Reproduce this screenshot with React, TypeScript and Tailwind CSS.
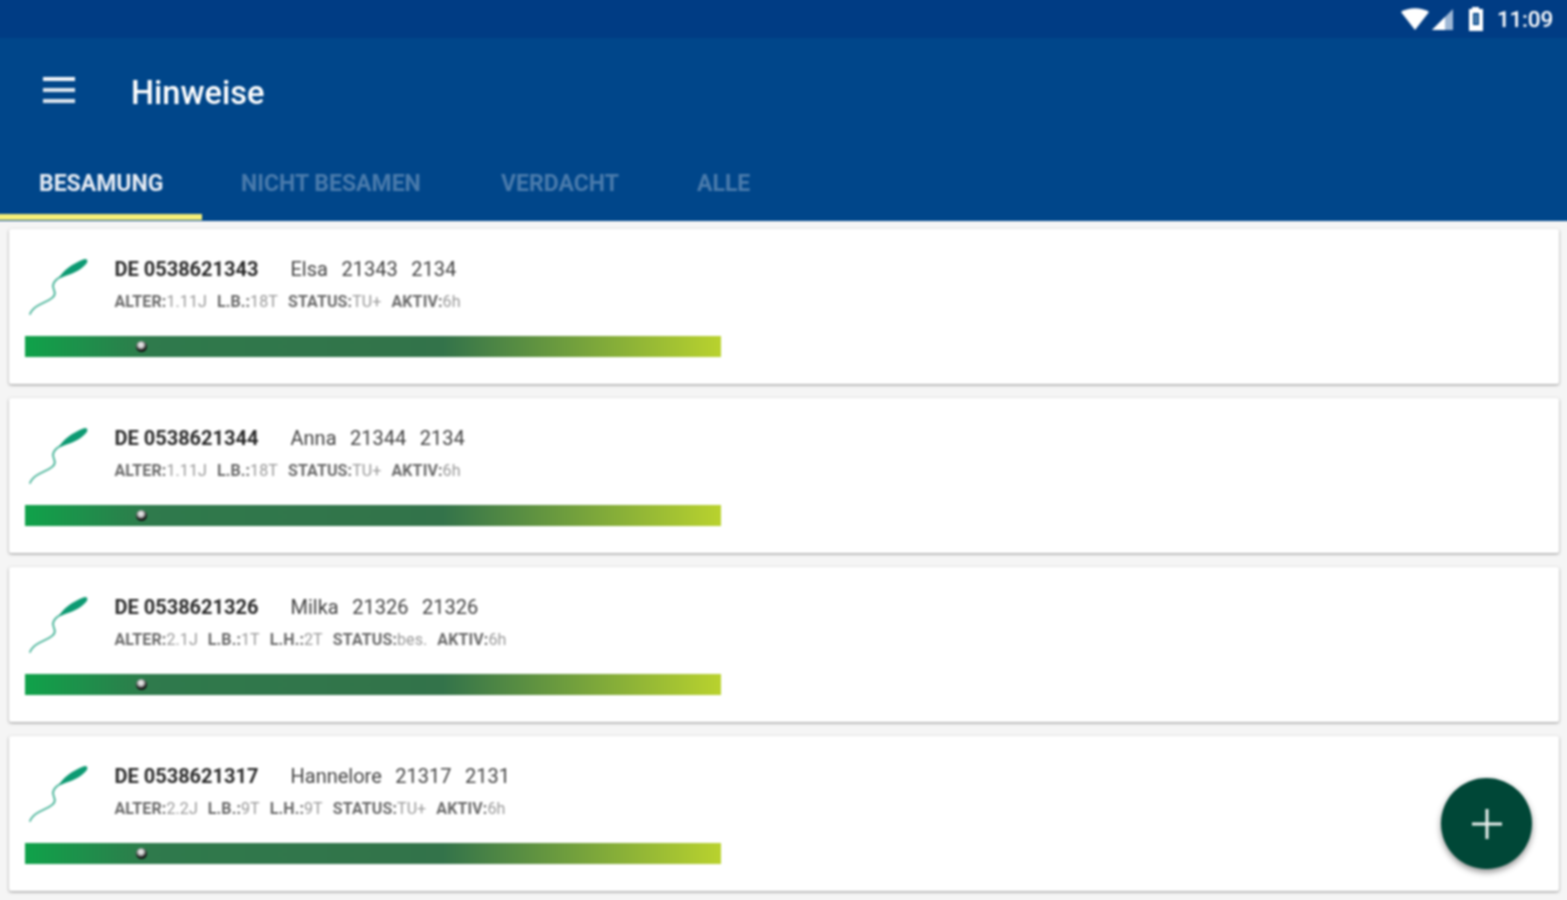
import React from "react";

const cows = [
  { id: "DE 0538621343", name: "Elsa  21343  2134", meta: [["ALTER:", "1.11J"], ["L.B.:", "18T"], ["STATUS:", "TU+"], ["AKTIV:", "6h"]] },
  { id: "DE 0538621344", name: "Anna  21344  2134", meta: [["ALTER:", "1.11J"], ["L.B.:", "18T"], ["STATUS:", "TU+"], ["AKTIV:", "6h"]] },
  { id: "DE 0538621326", name: "Milka  21326  21326", meta: [["ALTER:", "2.1J"], ["L.B.:", "1T"], ["L.H.:", "2T"], ["STATUS:", "bes."], ["AKTIV:", "6h"]] },
  { id: "DE 0538621317", name: "Hannelore  21317  2131", meta: [["ALTER:", "2.2J"], ["L.B.:", "9T"], ["L.H.:", "9T"], ["STATUS:", "TU+"], ["AKTIV:", "6h"]] },
];

function Sperm() {
  return (
    <svg width="64" height="60" viewBox="0 0 64 60" className="shrink-0">
      <path d="M5 57 C7 52 10 50 14 48 C18 46 20 45 24 43 C30 40 31 37 29 33 C27 29 28 26 31 23 C33 21 35 20 37 19" fill="none" stroke="#45b397" strokeWidth="1.8" strokeLinecap="round" />
      <path d="M34 21 C36 17 39 14 43 11 C48 7 56 3 60 2 C63 2 63 5 61 7 C57 12 49 16 43 18 C39 19 36 21 34 21 Z" fill="#0c9a72" />
    </svg>
  );
}

function Card({ cow }: { cow: (typeof cows)[number] }) {
  return (
    <div className="h-[155px] bg-white rounded-[2px] shadow-[0_1px_3px_rgba(0,0,0,0.4)] pl-4 pt-[28px]">
      <div className="flex h-[60px]">
        <Sperm />
        <div className="ml-[25.5px] pt-[1px]">
          <div className="flex text-[20px] leading-[22px] text-[#444] whitespace-pre [word-spacing:1.8px]">
            <span className="w-[176px] font-bold text-[#2b2b2b] [word-spacing:0px]">{cow.id}</span>
            <span>{cow.name}</span>
          </div>
          <div className="flex gap-[10px] mt-[12px] text-[16px] leading-[20px] whitespace-pre tracking-[0.1px]">
            {cow.meta.map(([k, v]) => (
              <span key={k}>
                <span className="font-bold text-[#6a6a6a]">{k}</span>
                <span className="text-[#999]">{v}</span>
              </span>
            ))}
          </div>
        </div>
      </div>
      <div className="relative mt-[19px] w-[696px] h-[21px] bg-[linear-gradient(90deg,#0fa24a_0%,#2f7a4c_18%,#33734a_60%,#b9d22e_100%)]">
        <div className="absolute left-[111px] top-[5px] w-[11px] h-[11px] rounded-full bg-[radial-gradient(circle_at_45%_35%,#f4f4f4_0%,#ccc_28%,#111_62%)]" />
      </div>
    </div>
  );
}

export default function App() {
  return (
    <div className="h-[900px] w-full overflow-hidden bg-[#f5f5f5]">
      <div className="relative h-[908px] -mt-[4px] -ml-[4px] w-[calc(100%+8px)] overflow-hidden bg-[#f5f5f5] font-['Roboto',sans-serif] blur-[0.9px]">
        <div className="h-[42px] pt-[4px] bg-[#003c84] flex items-center justify-end pr-[18px] text-white">
          <svg width="30" height="24" viewBox="0 0 30 24" className="mr-[2px]">
            <path d="M1 5 C9 0 21 0 29 5 L15 23 Z" fill="#fff" />
          </svg>
          <svg width="24" height="24" viewBox="0 0 24 24" className="ml-[-1px]">
            <path d="M1 23 L22 2 V23 Z" fill="#9fb8d6" />
            <path d="M1 23 L14 10 V23 Z" fill="#fff" />
          </svg>
          <svg width="18" height="26" viewBox="0 0 18 26" className="ml-[12px]">
            <path d="M5 1 H12 V3 H16 V25 H2 V3 H5 Z" fill="#fff" />
            <path d="M6 7 H12 V19 H6 Z" fill="#00468a" />
            <path d="M7.5 10 H10.5 M7.5 13 H10.5 M7.5 16 H10.5" stroke="#fff" strokeWidth="1.2" />
          </svg>
          <span className="ml-[12px] text-[22.5px] font-medium leading-none tracking-[-0.2px]">11:09</span>
        </div>
        <div className="h-[183px] bg-[#00468a] flex flex-col text-white">
          <div className="h-[106px] flex items-center pl-[47px]">
            <div className="flex flex-col gap-[7px] w-[32px] mb-[2px]">
              <div className="h-[4px] bg-white/95" />
              <div className="h-[4px] bg-white/85" />
              <div className="h-[4px] bg-white/85" />
            </div>
            <span className="ml-[56px] text-[32.5px] font-medium leading-none mt-[4px]">Hinweise</span>
          </div>
          <div className="flex h-[77px] text-[23px] font-bold">
            <div className="relative w-[206px] flex items-center pl-[43px] pt-[3px] text-[#e6ecf4]">
              <span>BESAMUNG</span>
              <div className="absolute left-0 right-0 bottom-[1px] h-[6px] bg-[#f6ef78]" />
            </div>
            <div className="w-[260px] flex items-center pl-[39px] pt-[3px] text-[#4a7bac]">NICHT BESAMEN</div>
            <div className="w-[196px] flex items-center pl-[39px] pt-[3px] text-[#4a7bac]">VERDACHT</div>
            <div className="flex items-center pl-[39px] pt-[3px] text-[#4a7bac]">ALLE</div>
          </div>
        </div>
        <div className="flex flex-col gap-[14px] pt-[8px] px-[13px] mr-[-1px]">
          {cows.map((c) => (
            <Card key={c.id} cow={c} />
          ))}
        </div>
        <button className="absolute left-[1445px] top-[782px] w-[91px] h-[91px] rounded-full bg-[#004737] shadow-[0_3px_6px_rgba(0,0,0,0.45)] flex items-center justify-center">
          <svg width="32" height="32" viewBox="0 0 32 32">
            <path d="M16 1 V31 M1 16 H31" stroke="#e8efec" strokeWidth="3" />
          </svg>
        </button>
      </div>
    </div>
  );
}
